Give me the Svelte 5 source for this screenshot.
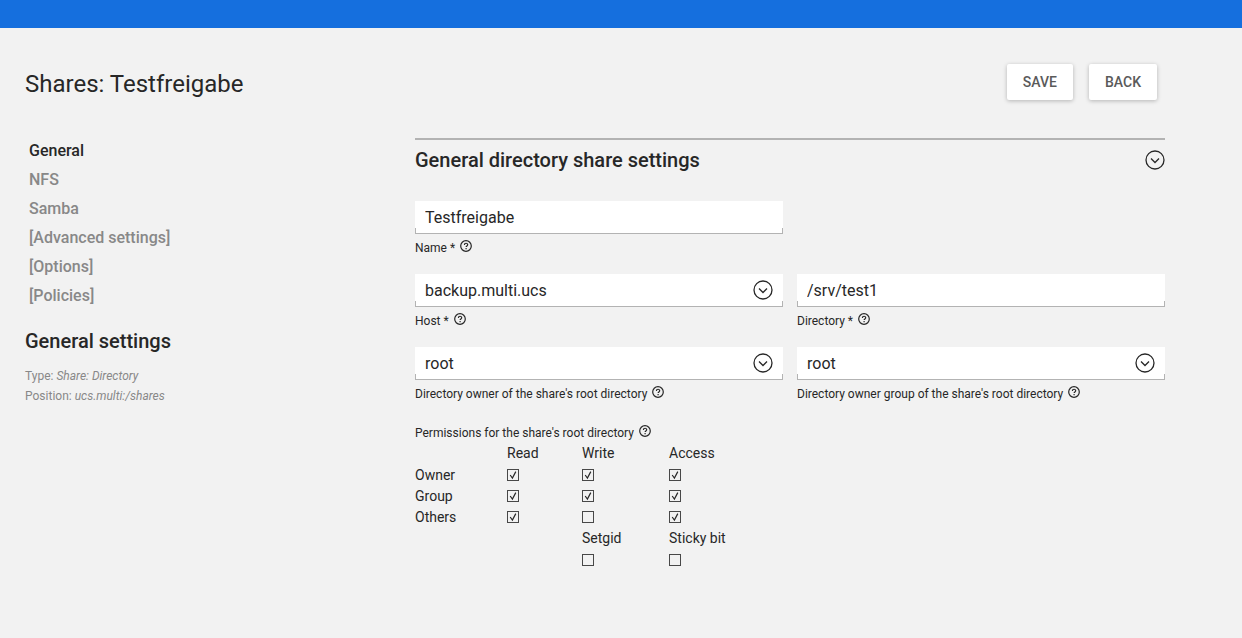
<script lang="ts">
  let tabs = [
    "General",
    "NFS",
    "Samba",
    "[Advanced settings]",
    "[Options]",
    "[Policies]",
  ];
  let active = $state("General");
  let open = $state(true);

  let share = $state({
    name: "Testfreigabe",
    host: "backup.multi.ucs",
    directory: "/srv/test1",
    owner: "root",
    group: "root",
    setgid: false,
    sticky: false,
  });

  let columns = ["Read", "Write", "Access"];
  let permissions = $state([
    { who: "Owner", flags: [true, true, true] },
    { who: "Group", flags: [true, true, true] },
    { who: "Others", flags: [true, false, true] },
  ]);
</script>

{#snippet chevron()}
  <svg class="chevron" viewBox="0 0 20 20" aria-hidden="true">
    <circle cx="10" cy="10" r="9" />
    <path d="M6 8.500l4 4 4-4" />
  </svg>
{/snippet}

{#snippet help(topic: string)}
  <button type="button" class="help" aria-label={`Help: ${topic}`}>
    <svg viewBox="0 0 12 12" aria-hidden="true">
      <circle cx="6" cy="6" r="5.300" />
      <path d="M4.400 4.900c0-2.200 3.300-2.100 3.300-.2 0 1.200-1.600 1.200-1.600 2.400" />
      <path d="M6.100 8.100v1.200" />
    </svg>
  </button>
{/snippet}

{#snippet check(i: number, j: number)}
  <input
    type="checkbox"
    aria-label={`${permissions[i].who} ${columns[j]}`}
    bind:checked={permissions[i].flags[j]} />
{/snippet}

<div class="bar"></div>
<div class="page">
  <header>
    <h1>Shares: Testfreigabe</h1>
    <div class="actions">
      <button type="submit" form="share">SAVE</button>
      <button type="button">BACK</button>
    </div>
  </header>

  <div class="columns">
    <aside>
      <nav>
        {#each tabs as tab}
          <a
            href="#{tab}"
            class:active={tab === active}
            onclick={(e) => {
              e.preventDefault();
              active = tab;
            }}>{tab}</a>
        {/each}
      </nav>
      <h2>General settings</h2>
      <p>Type: <i>Share: Directory</i></p>
      <p>Position: <i>ucs.multi:/shares</i></p>
    </aside>

    <main>
      <div class="section-title">
        <h2>General directory share settings</h2>
        <button
          type="button"
          aria-label="Toggle section"
          aria-expanded={open}
          onclick={() => (open = !open)}>{@render chevron()}</button>
      </div>

      {#if open}
        <form id="share" onsubmit={(e) => e.preventDefault()}>
          <div class="fields">
            <div class="field first">
              <input class="control" id="name" type="text" bind:value={share.name} />
              <div class="caption">
                <label for="name">Name *</label>
                {@render help("Name")}
              </div>
            </div>
            <div class="field">
              <div class="select">
                <select class="control" id="host" bind:value={share.host}>
                  <option>backup.multi.ucs</option>
                </select>
                {@render chevron()}
              </div>
              <div class="caption">
                <label for="host">Host *</label>
                {@render help("Host")}
              </div>
            </div>
            <div class="field">
              <input class="control" id="directory" type="text" bind:value={share.directory} />
              <div class="caption">
                <label for="directory">Directory *</label>
                {@render help("Directory")}
              </div>
            </div>
            <div class="field">
              <div class="select">
                <select class="control" id="owner" bind:value={share.owner}>
                  <option>root</option>
                </select>
                {@render chevron()}
              </div>
              <div class="caption">
                <label for="owner">Directory owner of the share's root directory</label>
                {@render help("Directory owner")}
              </div>
            </div>
            <div class="field">
              <div class="select">
                <select class="control" id="group" bind:value={share.group}>
                  <option>root</option>
                </select>
                {@render chevron()}
              </div>
              <div class="caption">
                <label for="group">Directory owner group of the share's root directory</label>
                {@render help("Directory owner group")}
              </div>
            </div>
          </div>

          <div class="caption permissions">
            <span id="permissions">Permissions for the share's root directory</span>
            {@render help("Permissions")}
          </div>
          <table aria-labelledby="permissions">
            <thead>
              <tr>
                <td></td>
                {#each columns as column}
                  <th scope="col">{column}</th>
                {/each}
              </tr>
            </thead>
            <tbody>
              {#each permissions as row, i}
                <tr>
                  <th scope="row">{row.who}</th>
                  {#each columns as _, j}
                    <td>{@render check(i, j)}</td>
                  {/each}
                </tr>
              {/each}
              <tr class="head">
                <td></td>
                <td></td>
                <th><label for="setgid">Setgid</label></th>
                <th><label for="sticky">Sticky bit</label></th>
              </tr>
              <tr>
                <td></td>
                <td></td>
                <td><input id="setgid" type="checkbox" bind:checked={share.setgid} /></td>
                <td><input id="sticky" type="checkbox" bind:checked={share.sticky} /></td>
              </tr>
            </tbody>
          </table>
        </form>
      {/if}
    </main>
  </div>
</div>

<style>
  :global(body) {
    background: #f2f2f2;
    color: #272727;
    font-family: Roboto, "Liberation Sans", sans-serif;
  }

  .bar {
    height: 28px;
    background: #156fde;
  }

  .page {
    padding: 36px 77px 40px 25px;
  }

  header {
    display: flex;
    justify-content: space-between;
    align-items: center;
    margin-bottom: 38px;
  }

  h1,
  h2,
  p {
    margin: 0;
  }

  h1 {
    padding-top: 4px;
    font-size: 24px;
    line-height: 32px;
    font-weight: 400;
  }

  h2 {
    font-size: 20px;
    line-height: 24px;
    font-weight: 500;
  }

  button {
    padding: 0;
    border: 0;
    background: none;
    color: inherit;
    font: inherit;
    cursor: pointer;
  }

  .actions {
    display: flex;
    gap: 16px;
    padding-right: 8px;
  }

  .actions button {
    height: 36px;
    padding: 0 16px;
    border-radius: 2px;
    background: #fff;
    box-shadow: 0 1px 4px rgba(0, 0, 0, 0.26);
    color: #5a5a5a;
    font-size: 14px;
    font-weight: 500;
  }

  .columns {
    display: grid;
    grid-template-columns: 26fr 50fr;
  }

  nav {
    display: flex;
    flex-direction: column;
    align-items: flex-start;
    gap: 9px;
    margin-bottom: 23px;
    padding: 3px 0 0 4px;
  }

  nav a {
    color: #888;
    font-size: 16px;
    line-height: 20px;
    font-weight: 500;
    text-decoration: none;
  }

  nav a.active {
    color: #272727;
  }

  aside h2 {
    margin-bottom: 13px;
  }

  aside p {
    color: #888;
    font-size: 12px;
    line-height: 20px;
  }

  .section-title {
    display: flex;
    justify-content: space-between;
    align-items: center;
    height: 40px;
    margin-bottom: 21px;
    border-top: 2px solid #b3b3b3;
  }

  .chevron {
    display: block;
    width: 20px;
    height: 20px;
    fill: none;
    stroke: #272727;
    stroke-width: 1.3;
  }

  .fields {
    display: grid;
    grid-template-columns: 1fr 1fr;
    gap: 17px 14px;
  }

  .first {
    grid-column: 1;
  }

  .first + .field {
    grid-column: 1;
  }

  .select {
    position: relative;
  }

  .select .chevron {
    position: absolute;
    top: 6px;
    right: 10px;
    pointer-events: none;
  }

  /* white box with a bottom line that turns up at both ends */
  .control {
    display: block;
    box-sizing: border-box;
    width: 100%;
    height: 33px;
    padding: 0 10px;
    border: 0;
    border-radius: 0;
    appearance: none;
    background:
      linear-gradient(#b3b3b3, #b3b3b3) bottom / 100% 1px no-repeat,
      linear-gradient(#b3b3b3, #b3b3b3) left bottom / 1px 6px no-repeat,
      linear-gradient(#b3b3b3, #b3b3b3) right bottom / 1px 6px no-repeat,
      #fff;
    color: inherit;
    font: inherit;
    font-size: 16px;
  }

  .caption {
    display: flex;
    align-items: center;
    gap: 5px;
    height: 18px;
    margin-top: 5px;
    font-size: 12px;
  }

  .permissions {
    margin-top: 21px;
  }

  .help {
    padding-bottom: 4px;
  }

  .help svg {
    display: block;
    width: 12px;
    height: 12px;
    fill: none;
    stroke: #272727;
    stroke-width: 1.2;
  }

  table {
    border-collapse: collapse;
    table-layout: fixed;
    font-size: 14px;
    line-height: 20px;
  }

  th,
  td {
    height: 21px;
    padding: 0;
    font-weight: 400;
    text-align: left;
  }

  thead th,
  .head th {
    height: 22px;
  }

  th:nth-child(1),
  td:nth-child(1) {
    width: 92px;
  }

  th:nth-child(2),
  td:nth-child(2) {
    width: 75px;
  }

  th:nth-child(3),
  td:nth-child(3) {
    width: 87px;
  }

  input[type="checkbox"] {
    display: block;
    box-sizing: border-box;
    width: 12px;
    height: 12px;
    margin: 0;
    border: 1px solid #484848;
    appearance: none;
  }

  input[type="checkbox"]:checked {
    background: url('data:image/svg+xml,<svg xmlns="http://www.w3.org/2000/svg" viewBox="0 0 10 10"><path d="M2.200 5l2.200 3L7.800 1.600" fill="none" stroke="%23272727" stroke-width="1.200"/></svg>');
  }
</style>
